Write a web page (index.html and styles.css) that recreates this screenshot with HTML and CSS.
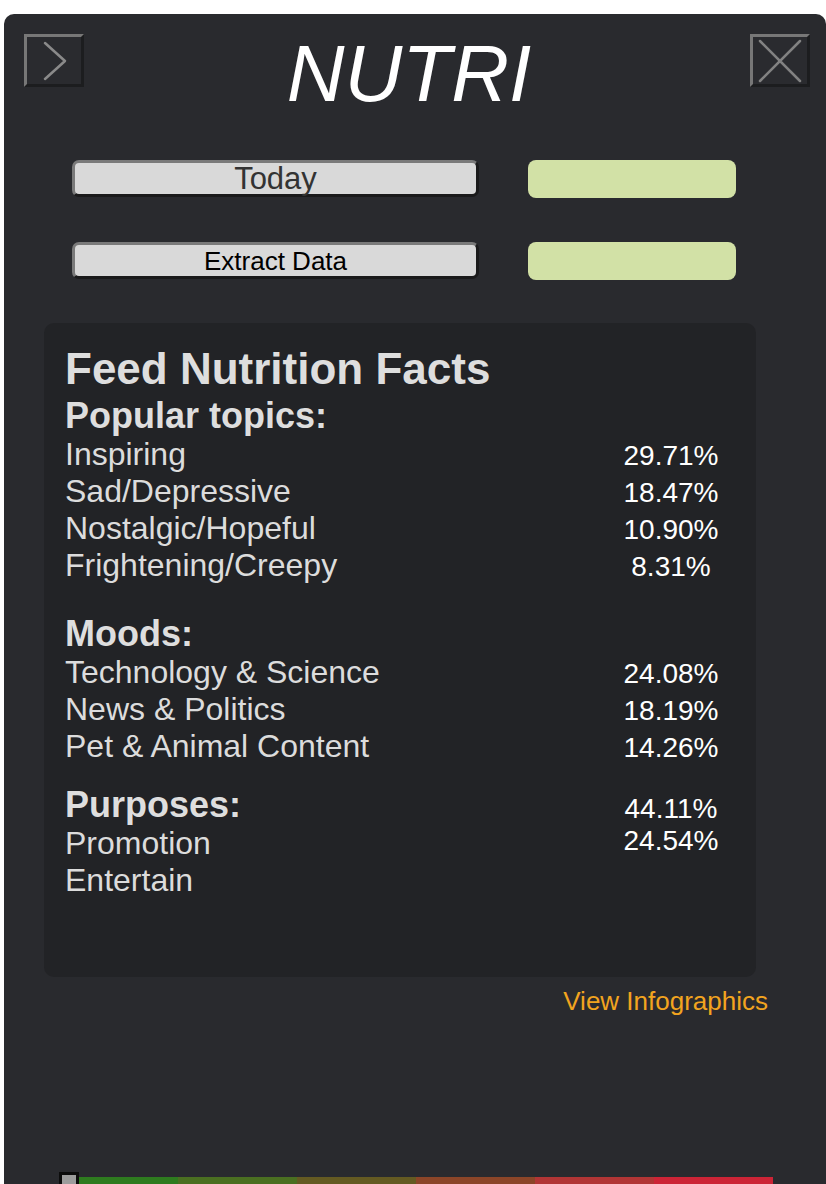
FILE: index.html
```html
<!DOCTYPE html>
<html lang="en">
<head>
<meta charset="utf-8">
<title>NUTRI</title>
<link rel="stylesheet" href="styles.css">
</head>
<body>
<div class="panel">
  <header class="top">
    <button class="icon-btn" aria-label="Expand">
      <svg width="54" height="47" viewBox="0 0 54 47"><polyline points="18,6 38,24 18,42" fill="none" stroke="#8a8a8a" stroke-width="2.5" stroke-linecap="round" stroke-linejoin="round"/></svg>
    </button>
    <h1 class="title">NUTRI</h1>
    <button class="icon-btn" aria-label="Close">
      <svg width="54" height="47" viewBox="0 0 54 47"><path d="M7 4 L47 44 M47 4 L7 44" stroke="#828282" stroke-width="2.5" stroke-linecap="round"/></svg>
    </button>
  </header>

  <div class="controls">
    <button class="btn btn-today">Today</button>
    <div class="swatch"></div>
    <button class="btn btn-extract">Extract Data</button>
    <div class="swatch"></div>
  </div>

  <section class="card">
    <h2 class="card-title">Feed Nutrition Facts</h2>

    <div class="section">
      <h3 class="sec-head">Popular topics:</h3>
      <div class="row"><span class="label">Inspiring</span><span class="pct">29.71%</span></div>
      <div class="row"><span class="label">Sad/Depressive</span><span class="pct">18.47%</span></div>
      <div class="row"><span class="label">Nostalgic/Hopeful</span><span class="pct">10.90%</span></div>
      <div class="row"><span class="label">Frightening/Creepy</span><span class="pct">8.31%</span></div>
    </div>

    <div class="section section-moods">
      <h3 class="sec-head">Moods:</h3>
      <div class="row"><span class="label">Technology &amp; Science</span><span class="pct">24.08%</span></div>
      <div class="row"><span class="label">News &amp; Politics</span><span class="pct">18.19%</span></div>
      <div class="row"><span class="label">Pet &amp; Animal Content</span><span class="pct">14.26%</span></div>
    </div>

    <div class="section section-purposes">
      <div class="col-labels">
        <h3 class="sec-head">Purposes:</h3>
        <div class="label">Promotion</div>
        <div class="label">Entertain</div>
      </div>
      <div class="col-pcts">
        <div class="pct">44.11%</div>
        <div class="pct">24.54%</div>
      </div>
    </div>
  </section>

  <div class="link-row"><a class="info-link" href="#">View Infographics</a></div>

  <div class="slider">
    <div class="track"></div>
    <span class="handle"></span>
  </div>
</div>
</body>
</html>
```

FILE: styles.css
```css
html, body {
  margin: 0;
  padding: 0;
  background: #ffffff;
  overflow: hidden;
}

body {
  font-family: "Liberation Sans", Arial, Helvetica, sans-serif;
}

.panel {
  margin: 14px 0 0 4px;
  width: 822px;
  min-height: 1200px;
  background: #292a2e;
  border-radius: 10px 10px 0 0;
  padding-top: 20px;
  box-sizing: border-box;
}

.top {
  display: flex;
  align-items: flex-start;
  padding: 0 16px 0 20px;
}

.icon-btn {
  width: 60px;
  height: 53px;
  padding: 0;
  margin: 0;
  box-sizing: border-box;
  border: 3px solid;
  border-color: #777777 #1c1d1f #1c1d1f #777777;
  background: #2a2b2f;
  display: flex;
  align-items: center;
  justify-content: center;
  flex: none;
}

.icon-btn svg {
  display: block;
}

.title {
  flex: 1;
  margin: 0;
  padding-right: 16px;
  text-align: center;
  font-family: "Liberation Sans", Arial, sans-serif;
  font-style: italic;
  font-weight: normal;
  font-size: 80px;
  line-height: 80px;
  color: #ffffff;
}

.controls {
  display: grid;
  grid-template-columns: 407px 208px;
  grid-auto-rows: 38px;
  column-gap: 49px;
  row-gap: 44px;
  margin: 46px 0 0 68px;
  align-items: start;
}

.btn {
  height: 37px;
  box-sizing: border-box;
  margin: 0;
  padding: 0;
  border: 3px solid;
  border-color: #7a7a7a #1a1a1b #1a1a1b #7a7a7a;
  border-radius: 7px;
  background: #d9d9d9;
  font-family: "Liberation Sans", Arial, sans-serif;
  text-align: center;
}

.btn-today {
  font-size: 31px;
  line-height: 32px;
  color: #333333;
}

.btn-extract {
  font-size: 26px;
  line-height: 32px;
  color: #000000;
}

.swatch {
  height: 38px;
  background: #d2e1a6;
  border-radius: 8px;
}

.card {
  margin: 43px 0 0 40px;
  width: 712px;
  height: 654px;
  box-sizing: border-box;
  padding: 24px 30px 0 21px;
  background: #222326;
  border-radius: 10px;
  color: #dddddd;
}

.card-title {
  margin: 0 0 4px;
  font-size: 44px;
  line-height: 44px;
  font-weight: bold;
  color: #dedede;
}

.sec-head {
  margin: 0 0 -1px;
  font-size: 36px;
  line-height: 42px;
  font-weight: bold;
  color: #dedede;
}

.section-moods {
  margin-top: 29px;
}

.section-purposes {
  margin-top: 19px;
  display: grid;
  grid-template-columns: 1fr 110px;
  align-items: start;
}

.row {
  display: grid;
  grid-template-columns: 1fr 110px;
  align-items: baseline;
}

.label {
  font-size: 32px;
  line-height: 37px;
  color: #dcdcdc;
}

.pct {
  font-size: 28px;
  line-height: 32.5px;
  color: #ffffff;
  text-align: center;
}

.col-pcts {
  padding-top: 9px;
}

.col-pcts .pct {
  line-height: 32px;
}

.link-row {
  margin-top: 9px;
  padding-right: 58px;
  text-align: right;
}

.info-link {
  font-size: 26px;
  line-height: 30px;
  color: #f2a41f;
  text-decoration: none;
}

.slider {
  position: relative;
  margin: 161px 0 0 55px;
  width: 714px;
}

.track {
  height: 20px;
  background: linear-gradient(to right,
    #2e7b1f 0, #2e7b1f 16.67%,
    #4a6f21 16.67%, #4a6f21 33.33%,
    #645a22 33.33%, #645a22 50%,
    #8b4528 50%, #8b4528 66.67%,
    #b13535 66.67%, #b13535 83.33%,
    #cc2436 83.33%, #cc2436 100%);
}

.handle {
  position: absolute;
  left: 0;
  top: -5px;
  width: 20px;
  height: 26px;
  box-sizing: border-box;
  border: 3px solid #0c0c0c;
  background: #9c9c9c;
}
```
